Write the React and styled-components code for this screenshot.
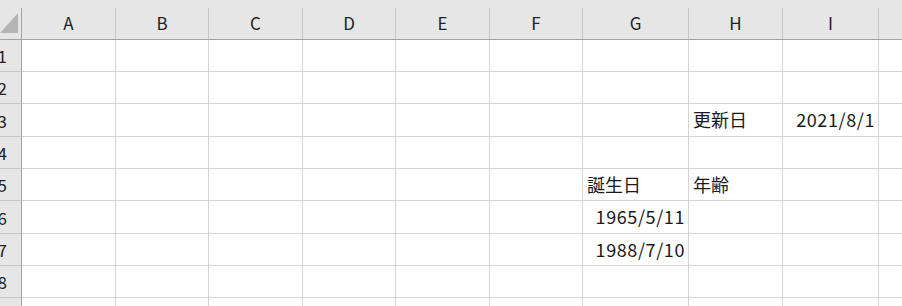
import React from "react";
import styled, { createGlobalStyle } from "styled-components";

const GlobalStyle = createGlobalStyle`
  html, body {
    margin: 0;
    padding: 0;
    background: #ffffff;
  }
  body {
    font-family: "Noto Sans CJK JP", "Noto Sans", sans-serif;
    overflow: hidden;
  }
`

const columns = [
  { name: "A", width: 94 },
  { name: "B", width: 93 },
  { name: "C", width: 94 },
  { name: "D", width: 93 },
  { name: "E", width: 94 },
  { name: "F", width: 93 },
  { name: "G", width: 106 },
  { name: "H", width: 94 },
  { name: "I", width: 96 },
  { name: "", width: 40 },
]

const rowHeights = [32, 32, 33, 32, 32, 33, 32, 32, 32]

// cell values by "row:col", dates are right aligned like excel numbers
const cells = {
  "3:H": { text: "更新日" },
  "3:I": { text: "2021/8/1", num: true },
  "5:G": { text: "誕生日" },
  "5:H": { text: "年齢" },
  "6:G": { text: "1965/5/11", num: true },
  "7:G": { text: "1988/7/10", num: true },
}

const gridTemplate = `22px ${columns.map((c) => c.width + "px").join(" ")}`

const Sheet = styled.div`
  width: 902px;
  height: 306px;
  overflow: hidden;
  background: #ffffff;
`

const HeaderRow = styled.div`
  display: grid;
  grid-template-columns: ${gridTemplate};
  height: 40px;
  background: #e6e6e6;
  border-bottom: 1px solid #a3a3a3;
  box-sizing: border-box;
`

const Corner = styled.div`
  position: relative;
  border-right: 1px solid #a3a3a3;
  margin-top: 8px;
`

const Triangle = styled.div`
  position: absolute;
  left: 0;
  top: 5px;
  width: 0;
  height: 0;
  border-left: 18px solid transparent;
  border-bottom: 20px solid #b4b4b4;
`

const ColHead = styled.div`
  margin-top: 8px;
  border-right: 1px solid #c6c6c6;
  display: flex;
  align-items: center;
  justify-content: center;
  font-size: 17px;
  color: #222222;
  padding-bottom: 2px;
`

const Row = styled.div`
  display: grid;
  grid-template-columns: ${gridTemplate};
  height: ${(p) => p.$h}px;
`

const RowHead = styled.div`
  background: #e6e6e6;
  border-right: 1px solid #a3a3a3;
  border-bottom: 1px solid #c6c6c6;
  display: flex;
  align-items: center;
  justify-content: flex-end;
  padding-right: 14px;
  font-size: 17px;
  color: #222222;
  box-sizing: border-box;
`

const Cell = styled.div`
  border-right: 1px solid #d4d4d4;
  border-bottom: 1px solid #d4d4d4;
  box-sizing: border-box;
  display: flex;
  align-items: center;
  justify-content: ${(p) => (p.$num ? "flex-end" : "flex-start")};
  padding: 0 3px 2px 4px;
  font-size: 18px;
  letter-spacing: ${(p) => (p.$num ? "0.6px" : "0")};
  color: #1a1a1a;
  white-space: nowrap;
  overflow: hidden;
`

export default function App() {
  return (
    <>
      <GlobalStyle />
      <Sheet>
        <HeaderRow>
          <Corner>
            <Triangle />
          </Corner>
          {columns.map((c, i) => (
            <ColHead key={i}>{c.name}</ColHead>
          ))}
        </HeaderRow>
        {rowHeights.map((h, r) => (
          <Row key={r} $h={h}>
            <RowHead>{r + 1}</RowHead>
            {columns.map((c, i) => {
              const v = cells[`${r + 1}:${c.name}`]
              return (
                <Cell key={i} $num={v && v.num}>
                  {v ? v.text : ""}
                </Cell>
              )
            })}
          </Row>
        ))}
      </Sheet>
    </>
  )
}
